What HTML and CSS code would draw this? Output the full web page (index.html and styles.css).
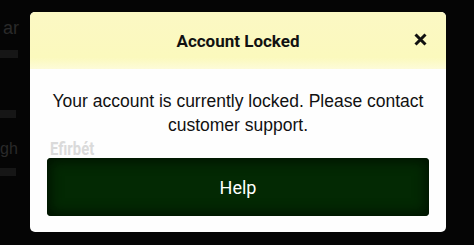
FILE: index.html
```html
<!DOCTYPE html>
<html>
<head>
<meta charset="utf-8">
<link rel="stylesheet" href="styles.css">
</head>
<body>
<div class="screen">
  <div class="bg-left">
    <span class="bg-text bg-ar">ar</span>
    <span class="bg-bar b1"></span>
    <span class="bg-bar b2"></span>
    <span class="bg-text bg-gh">gh</span>
    <span class="bg-bar b3"></span>
  </div>
  <div class="modal">
    <div class="modal-header">
      <span class="title">Account Locked</span>
      <span class="close" aria-label="close">
        <svg width="13" height="13" viewBox="0 0 13 13"><path d="M1.5 1.5 L11.5 11.5 M11.5 1.5 L1.5 11.5" stroke="#111" stroke-width="3"/></svg>
      </span>
    </div>
    <div class="modal-body">
      <p class="message">Your account is currently locked. Please contact customer support.</p>
      <div class="watermark">Efirbét</div>
      <button class="help">Help</button>
    </div>
  </div>
</div>
</body>
</html>
```
FILE: styles.css
```css
* { box-sizing: border-box; }
html, body { margin: 0; padding: 0; }
body {
  background: #050505;
  width: 474px;
  height: 245px;
  overflow: hidden;
  font-family: Roboto, "Liberation Sans", Arial, sans-serif;
}
.screen {
  position: relative;
  width: 474px;
  height: 245px;
  padding: 12px 28px 13px 30px;
  display: flex;
}
.bg-left {
  position: absolute;
  left: 0;
  top: 0;
  width: 30px;
  height: 245px;
}
.bg-text {
  position: absolute;
  color: #2a2a2a;
  font-size: 18px;
  font-family: "Liberation Sans", Arial, sans-serif;
}
.bg-ar { left: 3px; top: 18px; }
.bg-gh { left: 0; top: 140px; font-size: 16px; }
.bg-bar { position: absolute; left: 0; height: 8px; background: #161616; }
.b1 { top: 50px; width: 18px; }
.b2 { top: 110px; width: 16px; }
.b3 { top: 168px; width: 16px; }
.modal {
  flex: 1;
  background: #fefefe;
  border-radius: 5px;
  overflow: hidden;
  display: flex;
  flex-direction: column;
}
.modal-header {
  height: 57px;
  background: linear-gradient(#fbf8c4, #fbf9bd 80%, #fdfbd8);
  display: flex;
  align-items: center;
  justify-content: center;
  position: relative;
}
.title {
  font-weight: 700;
  font-size: 17px;
  color: #111;
}
.close {
  position: absolute;
  right: 19px;
  top: 21px;
  width: 13px;
  height: 13px;
  display: flex;
}
.modal-body {
  flex: 1;
  padding: 20px 17px 0 17px;
  display: flex;
  flex-direction: column;
}
.message {
  margin: 0 -10px;
  text-align: center;
  font-family: "Liberation Sans", Arial, sans-serif;
  font-size: 17.5px;
  line-height: 24px;
  color: #111;
}
.watermark {
  margin: 3px 0 0 3px;
  height: 17px;
  font-weight: 700;
  font-size: 19px;
  color: #dadada;
  transform: scaleX(0.78);
  transform-origin: left center;
  line-height: 17px;
}
.help {
  margin-top: 1px;
  height: 58px;
  border: none;
  border-radius: 4px;
  background: #032903;
  box-shadow: inset 0 0 12px 4px #011401;
  color: #fff;
  font-family: Roboto, "Liberation Sans", Arial, sans-serif;
  font-size: 18px;
  display: flex;
  align-items: center;
  justify-content: center;
}
```
